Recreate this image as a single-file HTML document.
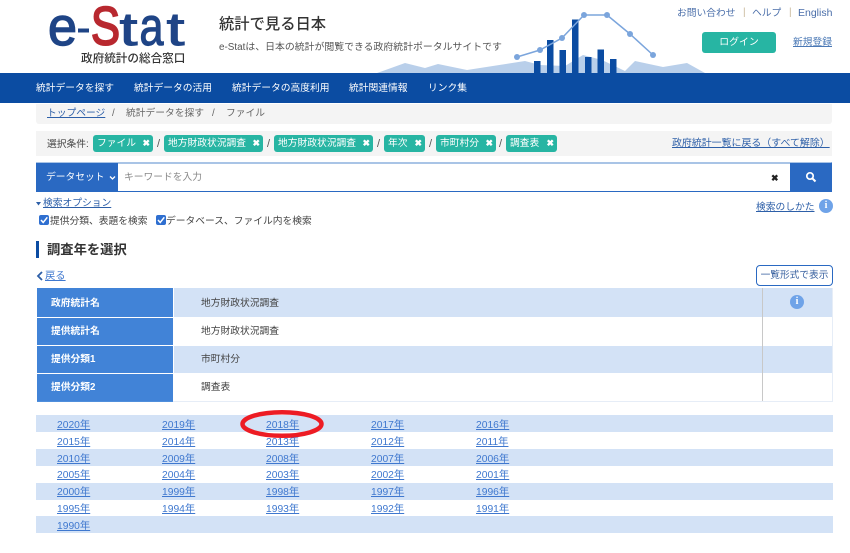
<!DOCTYPE html>
<html lang="ja"><head><meta charset="utf-8"><title>e-Stat</title>
<style>
html,body{margin:0;padding:0;background:#fff;width:850px;height:553px;overflow:hidden}
body{position:relative;font-family:"Liberation Sans","Noto Sans CJK JP",sans-serif;color:#444}
div,a,span{position:absolute;white-space:nowrap}
a{color:#2d5fa8;text-decoration:underline}
.nav{color:#fff;font-size:9.75px;top:82px;line-height:14px;font-weight:400}
.chip{background:#27b5a3;color:#fff;font-size:9.75px;height:17px;line-height:18px;top:135px;border-radius:3px;padding-left:4px;box-sizing:border-box}
.chip b{position:absolute;right:3px;top:-1px;font-size:9px;font-weight:700}
.sl{top:137px;font-size:11px;color:#555;line-height:15px}
.lb{left:37px;width:136px;background:#4183d7;color:#fff;font-size:9.75px;font-weight:700;padding-left:14px;box-sizing:border-box}
.v{left:174px;width:658px;font-size:9.75px;color:#444;padding-left:27px;box-sizing:border-box}
.y{font-size:10.3px;color:#3f78cf;line-height:14px;margin-top:1px}
.r{left:36px;width:797px;height:17px;background:#d3e2f6}
.cb{width:10px;height:10px;background:#2f6fd0;border-radius:2px;top:215px}
</style></head><body>

<svg style="position:absolute;left:0;top:0" width="850" height="104" viewBox="0 0 850 104">
<polygon points="377,73 405,63 425,68 438,64 467,70 525,61 540,65 565,66 583,55 602,60 625,71 635,61 663,67 687,63 705,73" fill="#b9cfea"/>
<g fill="#0b4ca2">
<rect x="534" y="61" width="6.5" height="13"/><rect x="547" y="40" width="6.5" height="34"/><rect x="559.500" y="50" width="6.500" height="24"/><rect x="572" y="19.500" width="6.500" height="54"/><rect x="585" y="57" width="6.500" height="17"/><rect x="597.500" y="49.500" width="6.500" height="24"/><rect x="610" y="59" width="6.500" height="15"/>
</g>
<polyline points="517,57 540,50 562,38 584,15 607,15 630,34 653,55" fill="none" stroke="#7ba5dc" stroke-width="1.5"/>
<g fill="#7ba5dc"><circle cx="517" cy="57" r="3"/><circle cx="540" cy="50" r="3"/><circle cx="562" cy="38" r="3"/><circle cx="584" cy="15" r="3"/><circle cx="607" cy="15" r="3"/><circle cx="630" cy="34" r="3"/><circle cx="653" cy="55" r="3"/></g>
<rect x="0" y="73" width="850" height="30" fill="#0b4ca2"/>
<g font-family="Liberation Sans">
<text x="48" y="45" fill="#1f4486" stroke="#1f4486" stroke-width="1.400" font-size="54" textLength="29" lengthAdjust="spacingAndGlyphs">e</text>
<rect x="78" y="28.500" width="11" height="4" fill="#1f4486"/>
<text x="91" y="44.500" fill="#b8282f" stroke="#b8282f" stroke-width="2" font-size="54" textLength="29" lengthAdjust="spacingAndGlyphs">S</text>
<text x="119.500" y="45" fill="#1f4486" stroke="#1f4486" stroke-width="1" font-size="46" textLength="18" lengthAdjust="spacingAndGlyphs">t</text>
<text x="139.500" y="45" fill="#1f4486" stroke="#1f4486" stroke-width="1.200" font-size="54" textLength="24" lengthAdjust="spacingAndGlyphs">a</text>
<text x="166.500" y="45" fill="#1f4486" stroke="#1f4486" stroke-width="1" font-size="46" textLength="18" lengthAdjust="spacingAndGlyphs">t</text>
</g>
</svg>

<div style="left:81px;top:51px;font-size:11.6px;line-height:15px;color:#333;font-weight:500">政府統計の総合窓口</div>
<div style="left:219px;top:15px;font-size:15.3px;line-height:20px;color:#333;font-weight:500">統計で見る日本</div>
<div style="left:219px;top:41px;font-size:9.9px;line-height:14px;color:#555">e-Statは、日本の統計が閲覧できる政府統計ポータルサイトです</div>

<div style="left:677px;top:7px;font-size:9.75px;line-height:14px;color:#4a6ea9">お問い合わせ</div>
<div style="left:743px;top:6px;font-size:10px;line-height:14px;color:#c9b79a">|</div>
<div style="left:752px;top:7px;font-size:9.75px;line-height:14px;color:#4a6ea9">ヘルプ</div>
<div style="left:789px;top:6px;font-size:10px;line-height:14px;color:#c9b79a">|</div>
<div style="left:798px;top:6px;font-size:10.500px;line-height:14px;color:#4a6ea9">English</div>
<div style="left:702px;top:32px;width:74px;height:21px;background:#27b5a3;border-radius:3px;color:#fff;font-size:9.9px;line-height:22px;text-align:center">ログイン</div>
<a style="left:793px;top:36px;font-size:9.75px;line-height:14px;color:#4a78b5">新規登録</a>

<div class="nav" style="left:36px">統計データを探す</div>
<div class="nav" style="left:134px">統計データの活用</div>
<div class="nav" style="left:232px">統計データの高度利用</div>
<div class="nav" style="left:349px">統計関連情報</div>
<div class="nav" style="left:428px">リンク集</div>

<div style="left:36px;top:104px;width:796px;height:20px;background:#f4f4f4;border-radius:0 0 3px 3px"></div>
<a style="left:47px;top:107px;font-size:9.75px;line-height:14px;color:#2d5fa8">トップページ</a>
<div style="left:112px;top:107px;font-size:9.75px;line-height:14px;color:#666">/</div>
<div style="left:126px;top:107px;font-size:9.75px;line-height:14px;color:#666">統計データを探す</div>
<div style="left:212px;top:107px;font-size:9.75px;line-height:14px;color:#666">/</div>
<div style="left:226px;top:107px;font-size:9.75px;line-height:14px;color:#666">ファイル</div>

<div style="left:36px;top:131px;width:796px;height:25px;background:#f4f4f4"></div>
<div style="left:47px;top:137px;font-size:9.75px;line-height:15px;color:#444">選択条件:</div>
<div class="chip" style="left:93px;width:60px">ファイル<b>✖</b></div>
<div class="sl" style="left:157px">/</div>
<div class="chip" style="left:164px;width:99px">地方財政状況調査<b>✖</b></div>
<div class="sl" style="left:267px">/</div>
<div class="chip" style="left:274px;width:99px">地方財政状況調査<b>✖</b></div>
<div class="sl" style="left:377px">/</div>
<div class="chip" style="left:384px;width:41px">年次<b>✖</b></div>
<div class="sl" style="left:429px">/</div>
<div class="chip" style="left:436px;width:60px">市町村分<b>✖</b></div>
<div class="sl" style="left:499px">/</div>
<div class="chip" style="left:506px;width:51px">調査表<b>✖</b></div>
<a style="left:672px;top:137px;font-size:9.94px;line-height:14px;color:#2d5fa8">政府統計一覧に戻る（すべて解除）</a>

<div style="left:36px;top:162px;width:796px;height:30px;box-sizing:border-box;border-top:2px solid #a9c4e6;border-bottom:1px solid #2a69c2;border-right:1px solid #2a69c2;background:#fff"></div>
<div style="left:36px;top:163px;width:82px;height:29px;background:#2a69c2;color:#fff;font-size:9.75px;line-height:30px;padding-left:10px;box-sizing:border-box">データセット</div>
<svg style="position:absolute;left:109px;top:175px" width="7" height="6"><path d="M1 1.500 L3.500 4 L6 1.500" fill="none" stroke="#fff" stroke-width="1.300"/></svg>
<div style="left:124px;top:170px;font-size:9.75px;line-height:15px;color:#888">キーワードを入力</div>
<div style="left:771px;top:171px;font-size:9px;line-height:14px;color:#222;font-weight:700">✖</div>
<div style="left:790px;top:163px;width:42px;height:29px;background:#2a69c2"></div>
<svg style="position:absolute;left:805px;top:171px" width="12" height="12" viewBox="0 0 12 12"><circle cx="5" cy="5" r="3.200" fill="none" stroke="#fff" stroke-width="1.700"/><path d="M7.500 7.500 L10.500 10.500" stroke="#fff" stroke-width="2"/></svg>

<svg style="position:absolute;left:36px;top:202px" width="6" height="4"><path d="M0 0H5L2.500 3.500Z" fill="#2d5fa8"/></svg>
<a style="left:43px;top:197px;font-size:9.75px;line-height:14px;color:#2d5fa8">検索オプション</a>
<div class="cb" style="left:39px"></div>
<svg style="position:absolute;left:39px;top:215px" width="10" height="10"><path d="M2 5 L4.200 7.500 L8.300 2.300" fill="none" stroke="#fff" stroke-width="1.500"/></svg>
<div style="left:50px;top:215px;font-size:9.75px;line-height:14px;color:#444">提供分類、表題を検索</div>
<div class="cb" style="left:156px"></div>
<svg style="position:absolute;left:156px;top:215px" width="10" height="10"><path d="M2 5 L4.200 7.500 L8.300 2.300" fill="none" stroke="#fff" stroke-width="1.500"/></svg>
<div style="left:166px;top:215px;font-size:9.75px;line-height:14px;color:#444">データベース、ファイル内を検索</div>
<a style="left:756px;top:201px;font-size:9.75px;line-height:14px;color:#2d5fa8">検索のしかた</a>
<div style="left:819px;top:199px;width:14px;height:14px;border-radius:50%;background:#6fa3e8;color:#fff;font:700 10px/14px 'Liberation Serif',serif;text-align:center">i</div>

<div style="left:36px;top:241px;width:3px;height:17px;background:#0b4ca2"></div>
<div style="left:47px;top:241px;font-size:13.300px;line-height:17px;font-weight:700;color:#333">調査年を選択</div>

<svg style="position:absolute;left:36px;top:271px" width="8" height="10"><path d="M6 1 L2 5 L6 9" fill="none" stroke="#2d5fa8" stroke-width="1.800"/></svg>
<a style="left:45px;top:270px;font-size:10.300px;line-height:14px;color:#3f78cf">戻る</a>
<div style="left:756px;top:265px;width:77px;height:21px;box-sizing:border-box;border:1px solid #2a69c2;border-radius:4px;background:#fff;color:#3a62a0;font-size:9.7px;line-height:20px;text-align:center">一覧形式で表示</div>

<div class="v" style="top:288px;height:29px;background:#d3e2f6;line-height:32px">地方財政状況調査</div>
<div class="v" style="top:318px;height:27px;background:#fff;line-height:28px">地方財政状況調査</div>
<div class="v" style="top:346px;height:27px;background:#d3e2f6;line-height:28px">市町村分</div>
<div class="v" style="top:374px;height:27px;background:#fff;line-height:28px">調査表</div>
<div class="lb" style="top:288px;height:29px;line-height:32px">政府統計名</div>
<div class="lb" style="top:318px;height:27px;line-height:28px">提供統計名</div>
<div class="lb" style="top:346px;height:27px;line-height:28px">提供分類1</div>
<div class="lb" style="top:374px;height:27px;line-height:28px">提供分類2</div>
<div style="left:37px;top:401px;width:136px;height:1px;background:#4f8fdc"></div>
<div style="left:173px;top:401px;width:660px;height:1px;background:#e6edf7"></div>
<div style="left:832px;top:288px;width:1px;height:114px;background:#e6edf7"></div>
<div style="left:762px;top:288px;width:1px;height:113px;background:#c8c8c8"></div>
<div style="left:790px;top:295px;width:14px;height:14px;border-radius:50%;background:#6fa3e8;color:#fff;font:700 10px/14px 'Liberation Serif',serif;text-align:center">i</div>

<div class="r" style="top:415px"></div>
<div class="r" style="top:449px"></div>
<div class="r" style="top:483px"></div>
<div class="r" style="top:516px"></div>

<a class="y" style="left:57px;top:418px">2020年</a><a class="y" style="left:162px;top:418px">2019年</a><a class="y" style="left:266px;top:418px">2018年</a><a class="y" style="left:371px;top:418px">2017年</a><a class="y" style="left:476px;top:418px">2016年</a>
<a class="y" style="left:57px;top:435px">2015年</a><a class="y" style="left:162px;top:435px">2014年</a><a class="y" style="left:266px;top:435px">2013年</a><a class="y" style="left:371px;top:435px">2012年</a><a class="y" style="left:476px;top:435px">2011年</a>
<a class="y" style="left:57px;top:452px">2010年</a><a class="y" style="left:162px;top:452px">2009年</a><a class="y" style="left:266px;top:452px">2008年</a><a class="y" style="left:371px;top:452px">2007年</a><a class="y" style="left:476px;top:452px">2006年</a>
<a class="y" style="left:57px;top:468px">2005年</a><a class="y" style="left:162px;top:468px">2004年</a><a class="y" style="left:266px;top:468px">2003年</a><a class="y" style="left:371px;top:468px">2002年</a><a class="y" style="left:476px;top:468px">2001年</a>
<a class="y" style="left:57px;top:485px">2000年</a><a class="y" style="left:162px;top:485px">1999年</a><a class="y" style="left:266px;top:485px">1998年</a><a class="y" style="left:371px;top:485px">1997年</a><a class="y" style="left:476px;top:485px">1996年</a>
<a class="y" style="left:57px;top:502px">1995年</a><a class="y" style="left:162px;top:502px">1994年</a><a class="y" style="left:266px;top:502px">1993年</a><a class="y" style="left:371px;top:502px">1992年</a><a class="y" style="left:476px;top:502px">1991年</a>
<a class="y" style="left:57px;top:519px">1990年</a>

<svg style="position:absolute;left:235px;top:405px" width="95" height="38"><ellipse cx="47" cy="19" rx="39.500" ry="11.800" fill="none" stroke="#ed1c24" stroke-width="4.500"/></svg>
</body></html>
